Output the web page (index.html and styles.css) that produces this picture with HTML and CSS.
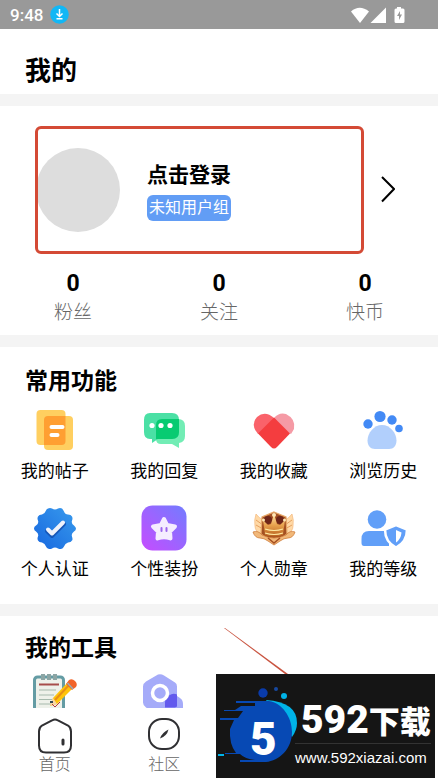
FILE: index.html
```html
<!DOCTYPE html>
<html lang="zh-CN">
<head>
    <meta charset="UTF-8">
    <meta name="viewport" content="width=device-width, initial-scale=1.0">
    <title>我的</title>
    <link rel="stylesheet" href="styles.css">
</head>
<body>

    <div class="status-bar">
        <span class="time">9:48</span>
        <svg class="download" viewBox="0 0 19 19" width="19" height="19">
            <circle cx="9.500" cy="9.500" r="9.300" fill="#12b7f5"/>
            <path d="M9.500 4v7M6.500 8.500l3 3 3-3M6.500 13.700h6" fill="none" stroke="#fff" stroke-width="1.500"/>
        </svg>
        <svg class="signals" viewBox="0 0 56 18" width="56" height="18">
            <path d="M1 5.500Q9.500-2 19 5.500L10 17z" fill="#fff"/>
            <path d="M36 1.500V17H20.500z" fill="#fff"/>
            <path d="M47 1h4v1.500h2q1.500 0 1.500 1.500v11.500q0 1.500-1.500 1.500h-7q-1.500 0-1.500-1.500V4q0-1.500 1.500-1.500h1z" fill="#fff"/>
            <path d="M50 5l-3 5h2v4l3-5.500h-2z" fill="#999"/>
        </svg>
    </div>

    <header class="page-header">
        <h1>我的</h1>
    </header>

    <main class="content">
        <section class="card profile">
            <a href="#" class="login">
                <span class="avatar"></span>
                <span class="user">
                    <span class="name">点击登录</span>
                    <span class="group">未知用户组</span>
                </span>
                <svg class="arrow" viewBox="0 0 14 28" width="14" height="28">
                    <path d="M1 1L13 13 1 25.500" fill="none" stroke="#000" stroke-width="2"/>
                </svg>
                <span class="highlight"></span>
            </a>
            <div class="stats">
                <a href="#"><b>0</b><span>粉丝</span></a>
                <a href="#"><b>0</b><span>关注</span></a>
                <a href="#"><b>0</b><span>快币</span></a>
            </div>
        </section>

        <section class="card functions">
            <h2>常用功能</h2>
            <div class="menu">
                <a href="#">
                    <svg viewBox="0 0 46 46" width="46" height="46">
                        <rect x="4.500" y="3" width="29" height="35" rx="4" fill="#ffcf60"/>
                        <rect x="12" y="9" width="29" height="34" rx="4" fill="#ffcf60"/>
                        <path d="M16 9h17.500v25q0 4-4 4H12V13q0-4 4-4z" fill="#ff9f32"/>
                        <path d="M19.500 20h11M19.500 28h6" stroke="#fff" stroke-width="4" stroke-linecap="round"/>
                    </svg>
                    <span>我的帖子</span>
                </a>
                <a href="#">
                    <svg viewBox="0 0 46 46" width="46" height="46">
                        <path d="M21 12h16q7 0 7 7v10q0 6-6 7v5l-7-4H20q-5 0-5-5V18q0-6 6-6z" fill="#72edb5"/>
                        <path d="M9 6h22q7 0 7 7v12q0 7-7 7H17l-6 4v-4H9q-6 0-6-7V13q0-7 6-7z" fill="#4be0a5"/>
                        <path d="M21 12h17v13q0 7-7 7H15V18q0-6 6-6z" fill="#08cb72"/>
                        <g fill="#fff"><circle cx="11" cy="18.500" r="2.600"/><circle cx="20" cy="18.500" r="2.600"/><circle cx="29" cy="18.500" r="2.600"/></g>
                    </svg>
                    <span>我的回复</span>
                </a>
                <a href="#">
                    <svg viewBox="0 0 46 46" width="46" height="46">
                        <path d="M23 11Q28 5 35 7q10 5 8 15l-3 5L20 16z" fill="#f59aa5"/>
                        <path d="M26 14L7 27Q-1 18 6 10q8-7 17 1z" fill="#fa626a"/>
                        <path d="M23 10.500L39 26.500 26 40q-3 3-6 0L7 26.500z" fill="#f43d3f"/>
                    </svg>
                    <span>我的收藏</span>
                </a>
                <a href="#">
                    <svg viewBox="0 0 46 46" width="46" height="46">
                        <path d="M22 18c8 0 14.500 8 14.500 15.500 0 5-3 8.500-7.500 8.500H15c-4.500 0-7.500-3.500-7.500-8.500C7.500 26 14 18 22 18z" fill="#b1cffc"/>
                        <g fill="#438af5"><circle cx="8" cy="17" r="4.700"/><circle cx="20" cy="9.500" r="5.600"/><circle cx="32" cy="13" r="4.700"/><circle cx="39" cy="21.500" r="3.800"/></g>
                    </svg>
                    <span>浏览历史</span>
                </a>
                <a href="#">
                    <svg viewBox="0 0 46 46" width="46" height="46">
                        <defs><linearGradient id="blue" x1="1" y1="0" x2="0" y2="1"><stop stop-color="#389bed"/><stop offset="1" stop-color="#1767df"/></linearGradient></defs>
                        <path d="M16 3.500q2-1 4 0 3 2 6 0 2-1 4 0 1 1 2 3 1 3 4 3 3 0 4 2 1 2 0 4-1 3 2 5 2 2 2 3 0 2-2 3-3 2-2 5 1 3 0 4-1 2-4 2-3 1-4 4-1 2-3 2.500-2 0-3-.500-3-2-6 0-2 1-4 0-1 0-2-2-1-3-4-4-3 0-4-2-1-2 0-4 1-3-2-5-2-1-2-3t2-3q3-2 2-5-1-2 0-4 1-2 4-2 3-1 4-4 0-1 2-2z" fill="url(#blue)"/>
                        <path d="M15 26l5 5 12-12" fill="none" stroke="#1557b9" stroke-width="4" stroke-linecap="round" stroke-linejoin="round"/>
                        <path d="M16 24.500l4 4 11-11" fill="none" stroke="#eef2fb" stroke-width="4" stroke-linecap="round" stroke-linejoin="round"/>
                    </svg>
                    <span>个人认证</span>
                </a>
                <a href="#">
                    <svg viewBox="0 0 46 46" width="46" height="46">
                        <defs><linearGradient id="purple" x1="1" y1="0" x2="0" y2="1"><stop stop-color="#727cff"/><stop offset="1" stop-color="#c64cff"/></linearGradient></defs>
                        <rect x=".500" y=".500" width="45" height="45" rx="11" fill="url(#purple)"/>
                        <path d="M23 14l3 6 8 1.500-5 5 .500 7Q23 31 16.500 33.500l.500-7-5-5 8-1.500z" fill="#f5edff" stroke="#f5edff" stroke-width="4" stroke-linejoin="round"/>
                        <path d="M20.500 23v3M25.500 23v3" stroke="#9d66ed" stroke-width="2" stroke-linecap="round"/>
                    </svg>
                    <span>个性装扮</span>
                </a>
                <a href="#">
                    <svg viewBox="0 0 46 46" width="46" height="46">
                        <defs><linearGradient id="gold" x2="0" y2="1"><stop stop-color="#ffe5a8"/><stop offset=".500" stop-color="#e8a24d"/><stop offset="1" stop-color="#b96220"/></linearGradient></defs>
                        <path d="M11 29Q4 27 4 21q-1-6 1-12 3 4 7 6zM35 29q7-2 7-8 1-6-1-12-3 4-7 6z" fill="#ffd9a6" stroke="#f3b87c" stroke-width=".700"/>
                        <path d="M5 15l7 5M5 20l7 4M41 15l-7 5M41 20l-7 4" stroke="#e0924c" stroke-width=".800"/>
                        <path d="M23 7l12 5 1 17-13 10L10 29l1-17z" fill="#a45022" stroke="#e6a868" stroke-width="1.200"/>
                        <circle cx="17" cy="15" r="4" fill="#6e2619"/><circle cx="29" cy="15" r="4" fill="#6e2619"/>
                        <path d="M12 15l5 5 3-1 3-10 3 10 3 1 5-5-2 15q-9 3-18 0z" fill="url(#gold)"/>
                        <circle cx="23" cy="10" r="2" fill="#ffe8b5"/><circle cx="12.500" cy="15" r="1.500" fill="#ffe8b5"/><circle cx="33.500" cy="15" r="1.500" fill="#ffe8b5"/>
                        <path d="M14 24q9 3 18 0M14 28q9 3 18 0" fill="none" stroke="#ffeaa4" stroke-width="1.200"/>
                        <path d="M2 27q5-2 9 3 6 3 12 3t12-3q4-5 9-3-2 6-7 6-4 0-8 3l-6 4-6-4q-4-3-8-3-5 0-7-6z" fill="#f1b879" stroke="#cf7e3b" stroke-width=".800"/>
                        <path d="M17 33l6 5 6-5" fill="none" stroke="#a64e20" stroke-width="1.500"/>
                    </svg>
                    <span>个人勋章</span>
                </a>
                <a href="#">
                    <svg viewBox="0 0 46 46" width="46" height="46">
                        <circle cx="17" cy="14.500" r="9.300" fill="#619ff8"/>
                        <path d="M9 26h20v15H4q-2.500 0-2.500-3v-4q0-8 7.500-8z" fill="#619ff8"/>
                        <path d="M36 20l11 4.500Q47 37 36 42.500 25 37 25 24.500z" fill="#619ff8" stroke="#fff" stroke-width="2.500"/>
                        <path d="M36 25l5.500 2.500Q41 34 36 37.500z" fill="#fff"/>
                    </svg>
                    <span>我的等级</span>
                </a>
            </div>
        </section>

        <section class="card tools">
            <h2>我的工具</h2>
            <div class="menu">
                <a href="#" aria-label="笔记">
                    <svg viewBox="0 0 46 46" width="46" height="46">
                        <rect x="2.500" y="3" width="29" height="42" rx="3" fill="#eef1ea" stroke="#649ca4" stroke-width="3"/>
                        <path d="M11 0v6M17 0v6M23 0v6" stroke="#8ca5a4" stroke-width="4"/>
                        <path d="M7 10.500h20" stroke="#a74d4b" stroke-width="2"/>
                        <path d="M7 16h17M7 21h15M7 25.500h13M7 30h12" stroke="#a6b9ac"/>
                        <path d="M21 24L36 8l5 6-16 16-7 2z" fill="#ffc40b"/>
                        <path d="M23 26L38 10" stroke="#e78f19" stroke-width="2"/>
                        <path d="M34 10l3-4q3-2 6 1t1 6l-4 3z" fill="#f26429"/>
                        <path d="M35.500 9l5.500 6" stroke="#99b0b4" stroke-width="1.500"/>
                        <path d="M21 24l4 6-7 2z" fill="#f9d5a4"/>
                        <path d="M18 27h3v2h-3z" fill="#344a54"/><path d="M20 30l3 3 5-5" fill="none" stroke="#b4373c"/>
                    </svg>
                </a>
                <a href="#" aria-label="设置">
                    <svg viewBox="0 0 46 46" width="46" height="46">
                        <path d="M17 .500q3-1 6 1l11 7q2 1 2 4v16q0 3-3 5l-10 7q-3 2-6 0L5 33.500q-3-2-3-5v-16q0-3 3-5z" fill="#a5abf9"/>
                        <path d="M24 38v-9l9-9 6 4q3 2 3 6v12H28z" fill="#a5abf9"/>
                        <path d="M24 33.500v-5q0-5 4-7 4-3 8-1v12l-2 1z" fill="#6259ed"/>
                        <circle cx="19" cy="19" r="7.500" fill="none" stroke="#fff" stroke-width="3.500"/>
                    </svg>
                </a>
            </div>
        </section>
    </main>

    <nav class="tab-bar">
        <a href="#">
            <svg viewBox="0 0 36 36" width="36" height="36">
                <path d="M15 2.500q3-2 6 0l10 5q3 2 3 6v14q0 7-7 7H9q-7 0-7-7v-14q0-4 3-6z" fill="none" stroke="#303033" stroke-width="2"/>
                <path d="M26 22v4" stroke="#303033" stroke-width="3" stroke-linecap="round"/>
            </svg>
            <span>首页</span>
        </a>
        <a href="#">
            <svg viewBox="0 0 36 36" width="36" height="36">
                <rect x="3" y="1" width="30" height="30" rx="13" fill="none" stroke="#303033" stroke-width="2"/>
                <path d="M22.500 11.500Q21 18 14 20.500q2-6 8.500-9z" fill="#303033"/>
            </svg>
            <span>社区</span>
        </a>
    </nav>

    <div class="watermark">
        <svg class="pointer" viewBox="0 0 64 46" width="64" height="46">
            <path d="M0 0h1L64 46h-3z" fill="#c95440"/>
        </svg>
        <svg class="logo" viewBox="0 0 79 104" width="79" height="104">
            <path d="M50 26q31 2 31 23 0 7-5 14z" fill="#00b3e8"/>
            <path d="M20 27h33c13 2 23 16 23 31 0 17-13 29-26 30H24v-2h15q-10-1-15-6H9v-1h11q-7-9-6-24l4-9H4v-2h18l5-7H8v-1h11l6-4h14v-3H20z" fill="#0749b4"/>
            <circle cx="47" cy="19" r="4.700" fill="#0a3baa"/>
            <circle cx="60" cy="15" r="2" fill="#17489f"/>
            <circle cx="68" cy="22" r="3" fill="#00b3e8"/>
            <path d="M2 81h6" stroke="#00b3e8" stroke-width="2"/>
            <text x="34" y="81" class="logo-number">5</text>
        </svg>
        <div class="site">
            <div class="site-name"><span>592</span>下载</div>
            <div class="site-url">www.592xiazai.com</div>
        </div>
    </div>

</body>
</html>
```
FILE: styles.css
```css
* {
    margin: 0;
    padding: 0;
    box-sizing: border-box;
}

body {
    font-family: Roboto, "Noto Sans CJK SC", sans-serif;
    background-color: #f4f4f4;
    color: #000;
    height: 100vh;
    display: flex;
    flex-direction: column;
    overflow: hidden;
}

a {
    color: inherit;
    text-decoration: none;
}

.status-bar {
    flex: none;
    height: 29px;
    padding: 0 32px 0 10px;
    display: flex;
    align-items: center;
    gap: 7px;
    background-color: #999;
    color: #fff;
}

.time {
    font-size: 17px;
    font-weight: 500;
}

.signals {
    margin-left: auto;
}

.page-header {
    flex: none;
    padding: 26px 25px 7px;
    background-color: #fff;
}

h1 {
    font-size: 26px;
    line-height: 32px;
    font-weight: bold;
}

.content {
    flex: 1;
    min-height: 0;
    padding-top: 12px;
    display: flex;
    flex-direction: column;
    gap: 12px;
    overflow-y: auto;
    scrollbar-width: none;
}

.card {
    flex: none;
    background-color: #fff;
}

/* profile */
.profile {
    padding: 20px 0 7px;
}

.login {
    position: relative;
    display: flex;
    align-items: center;
    height: 128px;
    padding: 0 43px 0 36px;
}

.avatar {
    width: 84px;
    height: 84px;
    border-radius: 50%;
    background-color: #ddd;
}

.user {
    display: flex;
    flex-direction: column;
    align-items: flex-start;
    gap: 5px;
    margin-left: 27px;
}

.name {
    font-size: 21px;
    line-height: 30px;
    font-weight: bold;
}

.group {
    padding: 0 2px;
    font-size: 16px;
    line-height: 26px;
    border-radius: 6px;
    background-color: #629df5;
    color: #fff;
}

.arrow {
    margin-left: auto;
}

.highlight {
    position: absolute;
    top: 0;
    bottom: 0;
    left: 35px;
    right: 74px;
    border: 3px solid #d44a35;
    border-radius: 6px;
}

.stats {
    display: grid;
    grid-template-columns: repeat(3, 1fr);
    padding-top: 16px;
}

.stats a {
    display: flex;
    flex-direction: column;
    align-items: center;
}

.stats b {
    font-size: 23px;
    line-height: 28px;
}

.stats span {
    font-size: 19px;
    line-height: 30px;
    color: #666;
    font-weight: 300;
}

/* menus */
h2 {
    padding: 0 25px;
    font-size: 23px;
    line-height: 32px;
    font-weight: bold;
}

.functions {
    padding: 19px 0 23px;
}

.tools {
    padding: 17px 0;
}

.menu {
    display: grid;
    grid-template-columns: repeat(4, 1fr);
    row-gap: 22px;
    padding-top: 9px;
}

.menu a {
    display: flex;
    flex-direction: column;
    align-items: center;
    gap: 6px;
    font-size: 17px;
    line-height: 24px;
}

/* bottom */
.tab-bar {
    flex: none;
    display: grid;
    grid-template-columns: repeat(4, 1fr);
    padding: 10px 0 3px;
    background-color: #fff;
}

.tab-bar a {
    display: flex;
    flex-direction: column;
    align-items: center;
    font-size: 16px;
    line-height: 22px;
    font-weight: 300;
    color: #666;
}

.watermark {
    position: fixed;
    right: 3px;
    bottom: 1px;
    width: 219px;
    height: 104px;
    display: flex;
    background-color: #151515;
    color: #fff;
}

.pointer {
    position: absolute;
    left: 8px;
    bottom: 100%;
}

.logo {
    overflow: visible;
}

.logo-number {
    font: 900 46px Roboto, sans-serif;
    fill: #fff;
}

.site {
    flex: none;
    padding-top: 22px;
}

.site-name {
    display: flex;
    align-items: center;
    height: 48px;
    padding-left: 6px;
    font-size: 31px;
    font-weight: 900;
    border-bottom: 1px solid #333;
    white-space: nowrap;
}

.site-name span {
    font-size: 39px;
    font-weight: 900;
}

.site-url {
    font-family: "Liberation Sans", Arial, sans-serif;
    font-size: 15px;
    line-height: 28px;
}
```
